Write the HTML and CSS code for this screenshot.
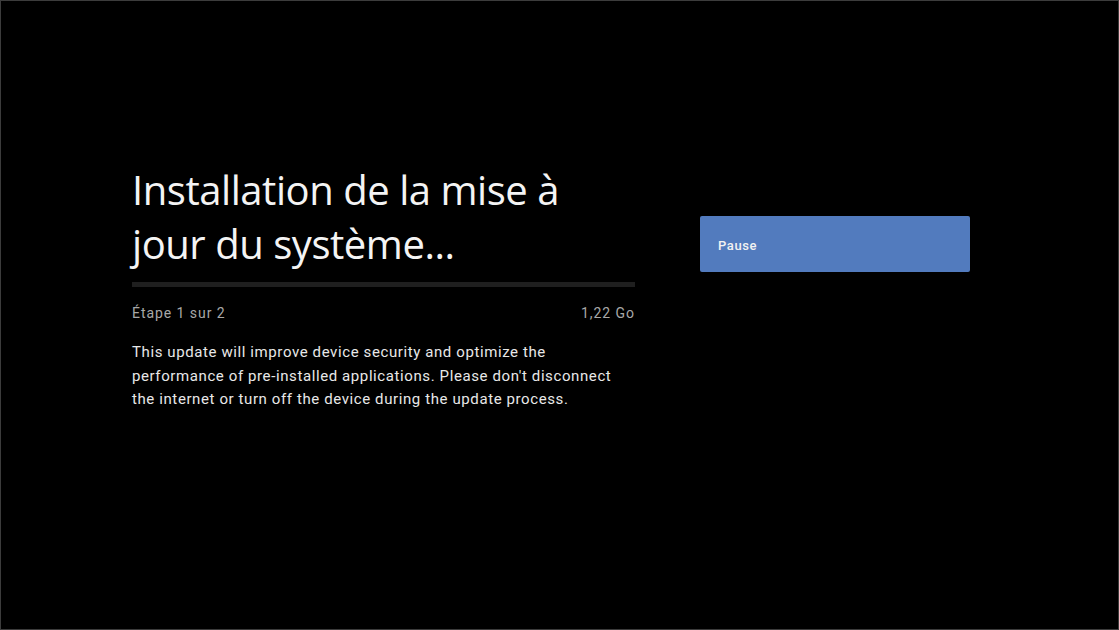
FILE: index.html
```html
<!DOCTYPE html>
<html>
<head>
  <link rel="stylesheet" href="styles.css">
</head>
<body>
  <div class="screen">
    <div class="info">
      <h1 class="title">Installation de la mise à jour du système...</h1>
      <div class="progress"><div class="progress-fill" style="width: 0%"></div></div>
      <div class="meta">
        <span>Étape 1 sur 2</span>
        <span>1,22 Go</span>
      </div>
      <p class="desc">This update will improve device security and optimize the performance of pre-installed applications. Please don't disconnect the internet or turn off the device during the update process.</p>
    </div>
    <div class="actions">
      <button class="action-btn">Pause</button>
    </div>
  </div>
</body>
</html>
```

FILE: styles.css
```css
html, body {
  margin: 0;
  height: 100%;
  background: #000;
}
.screen {
  box-sizing: border-box;
  height: 630px;
  border: 1px solid #3c3c3c;
  display: flex;
  padding: 162px 0 0 131px;
  font-family: Roboto, "Liberation Sans", sans-serif;
}
.info {
  width: 503px;
}
.title {
  margin: 0;
  font-family: "Open Sans", sans-serif;
  font-weight: 400;
  font-size: 40px;
  line-height: 54px;
  color: #f4f4f4;
  letter-spacing: -0.45px;
}
.progress {
  margin-top: 11px;
  height: 5px;
  background: #1f1f1f;
}
.progress-fill {
  height: 100%;
  background: #fff;
}
.meta {
  margin-top: 16px;
  display: flex;
  justify-content: space-between;
  font-size: 14px;
  line-height: 20px;
  letter-spacing: 0.95px;
  color: #a8a8a8;
}
.desc {
  margin: 18px 0 0;
  font-size: 15px;
  line-height: 23.5px;
  letter-spacing: 0.6px;
  color: #e8e8e8;
}
.actions {
  margin-left: 65px;
  padding-top: 53px;
  width: 270px;
}
.action-btn {
  width: 100%;
  height: 56px;
  border: none;
  border-radius: 2px;
  background: #527bbe;
  color: #f2f2f2;
  font-family: Roboto, sans-serif;
  font-weight: 500;
  font-size: 13px;
  letter-spacing: 0.6px;
  text-align: left;
  padding: 2px 18px 0;
}
```
